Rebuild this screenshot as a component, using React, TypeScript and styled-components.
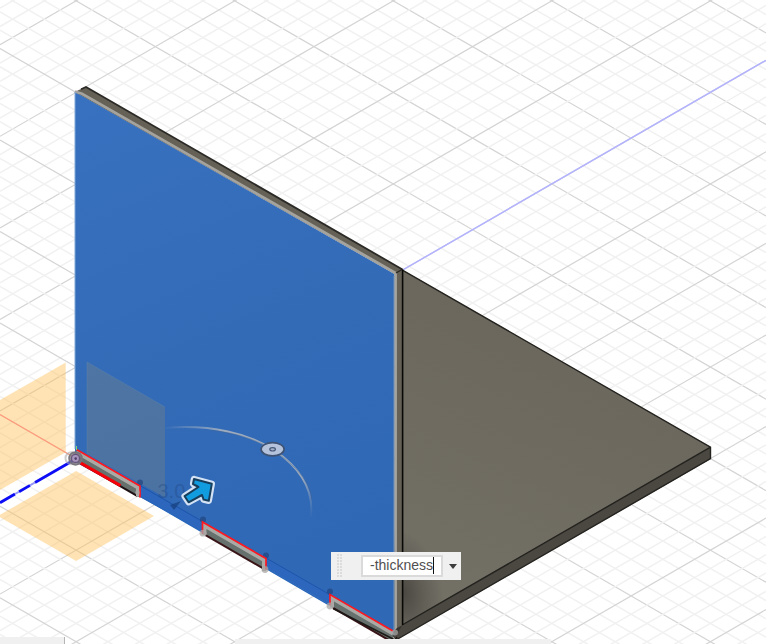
import React from "react";
import styled, { createGlobalStyle } from "styled-components";

const GlobalStyle = createGlobalStyle`
  body { margin: 0; background: #fff; overflow: hidden; }
  * { box-sizing: border-box; }
`;

const Viewport = styled.main`
  position: relative;
  width: 766px;
  height: 644px;
  overflow: hidden;
  background: #fff;
  font-family: "Liberation Sans", Arial, sans-serif;
`;

const Scene = styled.svg`
  display: block;
  width: 766px;
  height: 644px;
`;

const ParameterPopup = styled.div`
  position: absolute;
  left: 331px;
  top: 552px;
  width: 130px;
  height: 28px;
  display: flex;
  align-items: center;
  background: #f0f0f0;
`;

const Grip = styled.div`
  width: 5px;
  height: 24px;
  margin: 0 19px 0 6px;
  background: radial-gradient(circle at 1px 1px, #dcdcdc 0.8px, transparent 1.1px) 0 0 / 3px 3px;
`;

const ValueField = styled.div`
  width: 82px;
  height: 22px;
  display: flex;
  align-items: center;
  padding: 0 0 1px 7px;
  border: 2px solid #dadada;
  background: #fff;
  color: #505050;
  font-size: 14px;
  line-height: 17px;
  white-space: nowrap;
`;

const Caret = styled.span`
  width: 1px;
  height: 17px;
  background: #111;
`;

const DropArrow = styled.span`
  margin-left: 6px;
  margin-top: 1px;
  border: 4px solid transparent;
  border-top: 5px solid #3c3c3c;
  border-bottom: 0;
`;

const DockEdge = styled.div<{ $left: number; $width: number; $height: number; $divider?: boolean }>`
  position: absolute;
  bottom: 0;
  left: ${(p) => p.$left}px;
  width: ${(p) => p.$width}px;
  height: ${(p) => p.$height}px;
  background: #f0f0f0;
  border-right: ${(p) => (p.$divider ? "1px solid #b4b4b4" : "0")};
`;

const SLOPE = 0.57735;
const ORIGIN = { x: 76.1, y: 458.6 };
const MINOR = 18.31;
const ARROW = "M194 479L211.8 483.8L208.8 500.8L203.6 499.6L202 495L188.6 502.3L184.6 496.2L198.5 487L193 484Z";

function Grid() {
  const lines = [];
  for (let i = -54; i <= 36; i++) {
    const major = i % 5 === 0;
    for (const s of [1, -1]) {
      const y0 = ORIGIN.y + i * MINOR - s * SLOPE * ORIGIN.x;
      lines.push(
        <line
          key={`${i}/${s}`}
          x1={0}
          y1={y0}
          x2={766}
          y2={y0 + s * SLOPE * 766}
          stroke={major ? "#d4d4d4" : "#f1f1f1"}
          strokeWidth={major ? 1.2 : 1.5}
        />
      );
    }
  }
  return <g>{lines}</g>;
}

/* A tab cut in the lower edge of the panel, 63px wide. */
function Tab({ x, y, side, first }: { x: number; y: number; side: "left" | "right" | "both"; first?: boolean }) {
  return (
    <g transform={`translate(${x} ${y})`}>
      <path d="M0 0L63 36.4V48L0 11.6Z" fill="#66706d" />
      <path d="M3 13.2L61 46.7" stroke={first ? "#1d1113" : "#3a1518"} strokeWidth="2" />
      {first && <path d="M3 13L44 36.2" stroke="#f40008" strokeWidth="3" />}
      <path
        d={side === "left" ? "M2 13V3.5L63 38.8" : side === "right" ? "M0 2.6L61.5 38.2V47" : "M2 13V3.5L61.5 38V49"}
        stroke="#aaa9a5"
        strokeWidth="4"
        fill="none"
      />
      <path
        d={side === "left" ? "M0 11V0L63 36.4" : side === "right" ? "M0 0L63.5 36.6V48" : "M0 12V0L63.5 36.6V48"}
        stroke="#ff1820"
        strokeWidth="1.7"
        fill="none"
      />
    </g>
  );
}

function Body() {
  return (
    <g>
      {/* side panel and its base edge */}
      <path d="M402 269.8L710.5 447V459L396 640L392 636Z" fill="#4b4841" />
      <path d="M402.5 270L710 447.3L402.5 624Z" fill="url(#side)" />
      <path d="M402.5 270L710 447.3L402.5 624Z" fill="url(#corner)" />
      <path d="M402 269.8L710.5 447.2V458.7L396 640M710.5 447.2L397 628" stroke="#24231f" strokeWidth="1.4" fill="none" />
      {/* thickness of the front panel */}
      <path d="M74.5 92L85.5 87L402.5 269.5V625L395 636V274Z" fill="#656156" />
      <path d="M81 89.2L86 87L402.5 269.5" stroke="#2b2a26" strokeWidth="1.8" fill="none" />
      <path d="M402.6 269.5V625" stroke="#080807" strokeWidth="1.6" />
      {/* selected face */}
      <path d="M75 92L394.5 274V635L75 462Z" fill="url(#face)" />
      <path d="M75 91.5L82 93.8L395.6 273V634" stroke="#a5a39d" strokeWidth="2.7" fill="none" />
      <path d="M393.8 276V630" stroke="#6087b4" strokeWidth="1" />
      <path d="M396 273L402 269.6" stroke="#25231f" strokeWidth="1.2" />
      <path d="M75 92V449" stroke="#80a8d7" strokeWidth="1" />
    </g>
  );
}

export default function App() {
  return (
    <>
      <GlobalStyle />
      <Viewport>
        <Scene viewBox="0 0 766 644">
          <defs>
            <linearGradient id="face" x1="0" y1="0" x2=".25" y2="1">
              <stop offset="0" stopColor="#3871bf" />
              <stop offset=".55" stopColor="#336bb7" />
              <stop offset="1" stopColor="#2f68b5" />
            </linearGradient>
            <linearGradient id="side" x1="0.6" y1="0" x2=".2" y2="1">
              <stop offset="0" stopColor="#69655b" />
              <stop offset="1" stopColor="#737066" />
            </linearGradient>
            <radialGradient
              id="corner"
              gradientUnits="userSpaceOnUse"
              cx="0"
              cy="0"
              r="1"
              gradientTransform="translate(403 592) rotate(-12) scale(40 64)"
            >
              <stop offset="0" stopColor="#34322e" stopOpacity=".65" />
              <stop offset=".5" stopColor="#34322e" stopOpacity=".28" />
              <stop offset="1" stopColor="#34322e" stopOpacity="0" />
            </radialGradient>
            <linearGradient id="arc" gradientUnits="userSpaceOnUse" x1="165" y1="425" x2="312" y2="517">
              <stop offset="0" stopColor="#9daec4" stopOpacity="0" />
              <stop offset=".3" stopColor="#9eacbf" />
              <stop offset=".83" stopColor="#9caabd" />
              <stop offset="1" stopColor="#9caabd" stopOpacity="0" />
            </linearGradient>
          </defs>
          <Grid />
          {/* construction planes */}
          <g fill="#ffc15a" fillOpacity=".45">
            <path d="M65.7 362.5V452.3L0 490V400Z" />
            <path d="M76.2 471L154 516L76.2 561L-2 516Z" />
          </g>
          <path d={`M${ORIGIN.x} ${ORIGIN.y}L0 414.6`} stroke="#ff9a7c" strokeWidth="1.2" />
          <path d="M402 270.4L766 60.3" stroke="#b2b2ff" strokeWidth="1.5" />
          <Body />
          <path d="M87 362L165 407V497.5L87 454Z" fill="#a39260" fillOpacity=".23" />
          <path d="M87 454V362L165 407" stroke="#6f8da8" strokeOpacity=".3" fill="none" />

          {/* lower joint line and dimension */}
          <path d="M139 484L203 520.8V532.5L139 495.5ZM266 557L330 593.8V605L266 568Z" fill="#2d67bd" />
          <path d="M139 485L203 521.8M266 558L330 594.8" stroke="#1e55a8" />
          <path d="M140 495.8L202 531.8M267 568.8L329 604.8" stroke="#2867bc" strokeWidth="1.5" />
          <g fill="#22457f" fillOpacity=".7">
            <text x="157.5" y="498" fontSize="20" fillOpacity=".38">3.0</text>
            <circle cx="140" cy="482.5" r="3" />
            <circle cx="203" cy="519.5" r="3" />
            <circle cx="266" cy="555.5" r="3" />
            <circle cx="330" cy="591.5" r="3" />
            <path d="M170 505L181 501L174 510Z" fill="#173e7c" />
          </g>
          <Tab x={76.5} y={449.4} side="right" first />
          <Tab x={202.5} y={522} side="both" />
          <Tab x={330} y={594.6} side="left" />
          <path d="M397 628L402.5 625L396 636L393 632Z" fill="#36342f" />
          <path d="M333 608.5L395 640L397 637" stroke="#1c1917" strokeWidth="1.5" fill="none" />
          <g fill="#a7a6a4" fillOpacity=".75">
            <circle cx="203" cy="533.2" r="3.4" />
            <circle cx="265" cy="569.5" r="3.4" />
            <circle cx="330" cy="606" r="3.4" />
            <circle cx="395" cy="632.5" r="3" />
            <circle cx="137.5" cy="492.5" r="2.3" />
          </g>

          {/* forward axis */}
          <path d="M74 460L35 482.5M30 485.4L19 491.8M15 494L0 502.7" stroke="#0d0df5" strokeWidth="2.8" />
          <path d="M35 482.5L30 485.4M19 491.8L15 494" stroke="#9292fb" strokeWidth="1.8" />
          <path d="M76.5 446V450" stroke="#75dc79" />
          <circle cx="71.5" cy="458.2" r="6" fill="none" stroke="#aaa" strokeOpacity=".6" strokeWidth="2" />
          <circle cx="75.5" cy="458.4" r="6.5" fill="#77727d" fillOpacity=".8" stroke="#77757b" strokeWidth="1.5" />
          <circle cx="75.5" cy="458.4" r="4" fill="#a795bd" stroke="#66557a" strokeWidth="1.2" />
          <circle cx="75.7" cy="458.6" r="1.3" fill="#513f69" />

          {/* rotation manipulator */}
          <path d="M165 428C211 424 250 434 274 450C302 469 314 491 311 517" stroke="url(#arc)" strokeWidth="2" fill="none" />
          <path d="M211 430.2C239 433.5 256 439.5 274 450.5C302 470 312 488 311.5 500" stroke="#4a648a" strokeOpacity=".55" strokeWidth=".7" fill="none" />
          <ellipse cx="272.6" cy="449.3" rx="11.5" ry="6.6" fill="#b5c2dc" stroke="#3e5273" strokeWidth="1.7" />
          <ellipse cx="272.6" cy="449.3" rx="2.8" ry="1.7" fill="#a4b0c8" stroke="#465877" strokeWidth="1.2" />
          <g strokeLinejoin="round">
            <path d={ARROW} fill="#d3e2f4" stroke="#d3e2f4" strokeWidth="6.4" />
            <path d={ARROW} fill="#129ce0" stroke="#173e5c" strokeWidth="2" />
          </g>
        </Scene>
        <DockEdge $left={0} $width={65} $height={7} $divider />
        <DockEdge $left={235} $width={316} $height={5} />
        <ParameterPopup>
          <Grip />
          <ValueField>
            -thickness
            <Caret />
          </ValueField>
          <DropArrow />
        </ParameterPopup>
      </Viewport>
    </>
  );
}
